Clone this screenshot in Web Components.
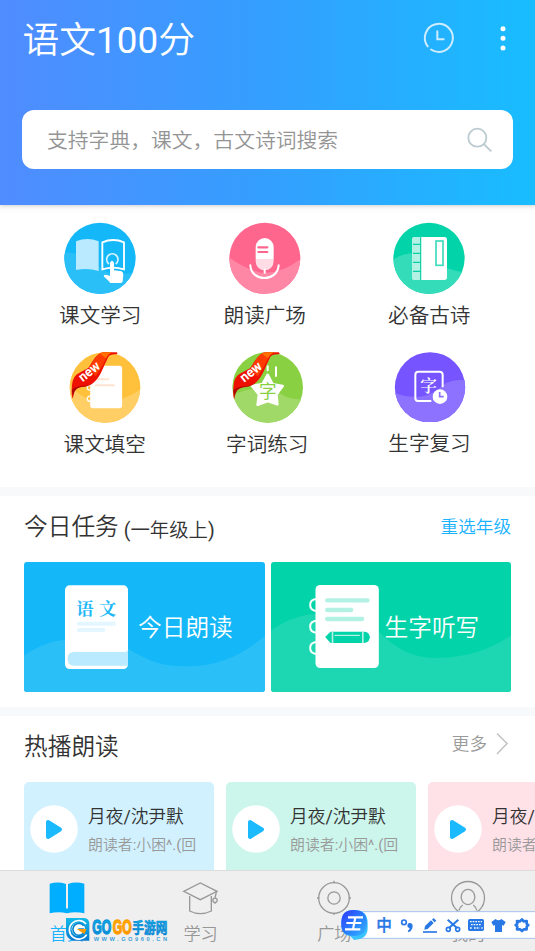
<!DOCTYPE html>
<html lang="zh-CN">
<head>
<meta charset="utf-8">
<title>语文100分</title>
<style>
html,body{margin:0;height:100%;overflow:hidden;background:#fff}
body{font-family:Roboto,"Noto Sans CJK SC DemiLight","Noto Sans CJK SC",sans-serif;font-weight:400;color:#333}
</style>
</head>
<body>
<yw-app></yw-app>
<script>
function define(name, html) {
  const t = document.createElement('template');
  t.innerHTML = html;
  customElements.define(name, class extends HTMLElement {
    constructor() {
      super();
      this.attachShadow({ mode: 'open' }).appendChild(t.content.cloneNode(true));
    }
  });
}

define('yw-header', `
<style>
:host{display:block;height:205px;flex:none;box-sizing:border-box;padding:0 22px;background:linear-gradient(90deg,#508cff,#349fff 50%,#18bdff);box-shadow:0 1px 4px rgba(0,0,0,.16);position:relative;z-index:1}
.bar{display:flex;align-items:center;height:78px;color:#fff}
h1{margin:0;flex:1;font-size:36.8px;line-height:50px;font-weight:inherit;padding:4px 0 0 .5px}
svg{display:block}
.bar svg{margin:0 2px 2px 0}
.search{margin-top:32px;height:59px;border-radius:12px;background:#fff;display:flex;align-items:center;padding:0 20px 0 25px}
.search span{flex:1;font-size:20.8px;line-height:30px;color:#949494;padding-top:2px}
</style>
<div class="bar"><h1>语文100分</h1>
<svg width="90" height="36" viewBox="470 61 270 108" fill="none" stroke-linecap="round">
<path d="M490 140A42 42 0 1 1 500 149.500" stroke="#cdedff" stroke-width="6"/>
<path d="M519 95V119H538" stroke="#cdedff" stroke-width="6"/>
<g fill="#fff"><circle cx="716" cy="87" r="7.500"/><circle cx="716" cy="116" r="7.500"/><circle cx="716" cy="145" r="7.500"/></g></svg></div>
<div class="search"><span>支持字典，课文，古文诗词搜索</span>
<svg width="26" height="26" viewBox="606 380 78 78" fill="none" stroke="#bccad1" stroke-width="5.500"><circle cx="637" cy="412" r="27"/><path d="M656 431L679 453"/></svg></div>`);

define('yw-feature', `
<style>
:host{display:flex;flex-direction:column;align-items:center}
.icon{height:72px}
.label{font-size:20.6px;line-height:30px;margin-top:7px;white-space:nowrap}
::slotted(svg){display:block;width:72px;height:72px}
</style><div class="icon"><slot name="icon"></slot></div><div class="label"><slot></slot></div>`);

const ribbon = (dx) => `<g transform="translate(${dx} 0)">
<path d="M96 192C92 178 94 160 95 148Q98 124 116 115L144 100C152 90 158 73 175 59Q181 52 194 52L230 52Q236 56 230 58Q210 57 205 66L193 91C185 111 174 135 155 148C140 158 112 153 101 171Q97 179 98 190Z" fill="#ee1000"/>
<path d="M146 99C155 88 160 72 177 57Q184 53 197 52L217 52Q206 56 200 67L188 91L167 125Z" fill="#ff3b00"/><path d="M180 56Q186 52 195 52H216Q203 58 198 70Z" fill="#ff7100"/>
<path d="M94 166Q106 155 132 154Q148 152 158 145Q144 157 122 157Q102 160 98 186Z" fill="#b00000"/>
<text x="0" y="0" transform="translate(127 143) rotate(-38)" font-family="Roboto,sans-serif" font-weight="700" font-size="41" fill="#fff" textLength="71" lengthAdjust="spacingAndGlyphs">new</text></g>`;

define('yw-features', `
<style>
:host{display:grid;grid-template-columns:repeat(3,164.5px);grid-auto-rows:129px;height:265px;padding:17px 0 0 18px;flex:none;background:linear-gradient(#f9f9f9,#fff 9px)}
.shift{padding-left:9px}.mid{padding-left:5px}.last{padding-left:.500px;margin-top:-1px}
</style>
<yw-feature><svg slot="icon" viewBox="72 36 216 216"><defs><clipPath id="c1"><circle cx="180" cy="145" r="107"/></clipPath></defs>
<g clip-path="url(#c1)"><path fill="#14b8f8" d="M72 36h216v217H72z"/><path fill="#2bbff8" d="M72 129Q110 124 151 150Q211 207 258 191Q275 188 290 187V253H72z"/></g>
<path d="M108 94Q142 80 176 94V183Q142 172 108 180Z" fill="#b9eaff"/><path d="M187 97Q220 83 252 97V178Q219 168 187 178Z" fill="none" stroke="#fff" stroke-width="5.500"/>
<path d="M207 162A17 17 0 1 1 227 162" fill="none" stroke="#d9f4ff" stroke-width="5"/><path d="M210 158Q216 146 222 158V181L240 183Q250 184 250 194L248 213Q248 219 239 219H211Q203 209 193 201Q188 194 198 194L210 198Z" fill="#fff"/></svg>课文学习</yw-feature>
<yw-feature><svg slot="icon" viewBox="56 36 216 216"><defs><clipPath id="c2"><circle cx="163.500" cy="145" r="106.500"/></clipPath></defs><g clip-path="url(#c2)"><path fill="#ff668d" d="M55 36h218v217H55z"/><path fill="#ff87a6" d="M55 142Q110 180 151 188Q214 192 272 146V253H55z"/></g>
<path d="M136 147V111a27 27 0 0 1 54 0v36z" fill="#fff"/><path d="M136 147h54v7a27 27 0 0 1-54 0z" fill="#ffdce6"/><path d="M144 112h27M144 126h27" stroke="#ff668d" stroke-width="6.500" stroke-linecap="round"/><path d="M120 166C123 217 201 217 205 166" fill="none" stroke="#fff" stroke-width="6" stroke-linecap="round"/><path d="M163 176V191" stroke="#fff" stroke-width="6"/></svg>朗读广场</yw-feature>
<yw-feature><svg slot="icon" viewBox="549 36 216 216"><defs><clipPath id="c3"><circle cx="657" cy="145" r="107"/></clipPath></defs><g clip-path="url(#c3)"><path fill="#03d3a8" d="M548 36h218v217H548z"/><path fill="#35dcba" d="M548 151C582 124 626 123 666 151Q705 181 766 187V253H548z"/></g>
<rect x="606" y="81" width="105" height="129" rx="8" fill="#fff"/><path d="M630 81h-16q-8 0-8 8v113q0 8 8 8h16z" fill="#b2f1e4"/><path d="M632 81V210M609 103h23M609 130h23M609 157h23M609 184h23" stroke="#09cfa5" stroke-width="3.500"/><rect x="678" y="93" width="21" height="73" fill="#fff" stroke="#3ddcbd" stroke-width="5"/></svg>必备古诗</yw-feature>
<yw-feature class="shift"><svg slot="icon" viewBox="87 48 216 219"><defs><clipPath id="c4"><circle cx="195" cy="159" r="107.500"/></clipPath></defs><g clip-path="url(#c4)"><path fill="#ffc13b" d="M86 48h220v220H86z"/><path fill="#ffce65" d="M86 151Q132 202 190 204Q246 203 304 164V268H86z"/></g>
<path d="M153 150q-12 2-12 10t12 7M153 184q-12 2-12 10t12 7" fill="none" stroke="#fff" stroke-width="4"/><rect x="150" y="93" width="97" height="129" rx="8" fill="#fff"/><path d="M167 134h38M167 152h55" stroke="#ffe4d2" stroke-width="6" stroke-linecap="round"/>${ribbon(0)}</svg>课文填空</yw-feature>
<yw-feature class="mid"><svg slot="icon" viewBox="64 48 216 216"><defs><clipPath id="c5"><circle cx="174" cy="157" r="106"/></clipPath></defs><g clip-path="url(#c5)"><path fill="#89d143" d="M64 48h220v220H64z"/><path fill="#a0d968" d="M64 183Q109 158 158 161Q188 160 220 181Q248 196 281 192V268H64z"/></g>
<path d="M199 97V123M174 94V106" stroke="#fff" stroke-width="6" stroke-linecap="round"/><path d="M174 120L189 148L219 153L200 178L203 208L174 198L144 209L148 178L127 153L159 147Z" fill="#fff" stroke="#fff" stroke-width="8" stroke-linejoin="round"/>
<text x="148" y="190" font-size="53" font-weight="400" font-family="Noto Sans CJK SC,sans-serif" fill="#89d143">字</text>${ribbon(-23)}</svg>字词练习</yw-feature>
<yw-feature class="last"><svg slot="icon" viewBox="552 45 216 216"><defs><clipPath id="c6"><circle cx="660" cy="157" r="105.500"/></clipPath></defs><g clip-path="url(#c6)"><path fill="#7654ff" d="M552 48h220v220H552z"/><path fill="#8d71ff" d="M552 172Q589 190 637 184Q675 177 698 150Q728 132 768 136V268H552z"/></g>
<path d="M664 198H624q-8 0-8-8V119q0-9 9-9H688q10 0 10 9V157" fill="none" stroke="#fff" stroke-width="6"/><text x="631" y="172" font-size="50" font-weight="600" font-family="Noto Serif CJK SC,Noto Sans CJK SC,serif" fill="#fff">字</text><circle cx="690" cy="185" r="22" fill="#fff"/><path d="M689 171v14h12" fill="none" stroke="#8d71ff" stroke-width="5"/></svg>生字复习</yw-feature>`);

define('yw-section', `
<style>
:host{display:block;border-top:9px solid #f8f9fb;flex:none}
header{display:flex;justify-content:space-between;height:66px;padding:0 24px;box-sizing:border-box}
.h{font-size:23.7px;line-height:62px;white-space:nowrap}
</style><header><div class="h"><slot name="title"></slot></div><slot name="action"></slot></header><slot></slot>`);

define('yw-task', `
<style>
:host{display:block;width:240.500px;height:130px;border-radius:3px;overflow:hidden;background:var(--bg);position:relative}
::slotted(svg){position:absolute;inset:0;display:block;width:100%;height:100%}
.t{position:relative;padding-left:114px;color:#fff;font-size:23.7px;line-height:132px;white-space:nowrap}
</style><slot name="art"></slot><div class="t"><slot></slot></div>`);

define('yw-audio', `
<style>
:host{display:flex;flex:none;width:190px;height:100px;border-radius:5px 5px 0 0;background:var(--bg);overflow:hidden}
svg{flex:none;margin:23px 10.500px 0 5.500px;width:48px;height:48px;display:block}
.a{font-size:17.7px;line-height:26px;margin-top:22px;white-space:nowrap}
.b{font-size:14.9px;line-height:22px;color:#999;margin-top:4px;white-space:nowrap}
</style>
<svg viewBox="0 0 48 48"><circle cx="24" cy="24" r="23.800" fill="#fff"/><path d="M18 17L30 24.500L18 32Z" fill="#1bbaff" stroke="#1bbaff" stroke-width="4" stroke-linejoin="round"/></svg>
<div><div class="a">月夜/沈尹默</div><div class="b">朗读者:小困^.(回</div></div>`);

define('yw-tab', `
<style>
:host{display:flex;flex-direction:column;align-items:center;flex:1;color:#979797}
:host([active]){color:#1bb3ff}
::slotted(svg){display:block;width:40px;height:40px;margin-top:7px}
span{font-size:17.2px;line-height:26px;margin-top:3px}
</style><slot name="icon"></slot><span><slot></slot></span>`);

define('yw-tabs', `
<style>:host{display:flex;flex:none;height:81px;box-sizing:border-box;border-top:1px solid #dcdcdc;background:#efefef}</style>
<yw-tab active><svg slot="icon" viewBox="140 40 120 120" fill="#00aeff"><path d="M148 57Q174 50 197 58V130Q200 134 203 130V58Q226 50 252 57V146Q224 140 200 146Q175 140 148 146Z"/></svg>首页</yw-tab>
<yw-tab><svg slot="icon" viewBox="542 40 120 120" fill="none" stroke="#999" stroke-width="4"><path d="M550 80L600 55L650 80L600 105Z"/><path d="M568 94V139Q600 155 633 139V94M648 82L644 100M644 113V117"/><circle cx="644" cy="107" r="6.500"/></svg>学习</yw-tab>
<yw-tab><svg slot="icon" viewBox="147 40 120 120" fill="none" stroke="#999" stroke-width="4"><circle cx="207" cy="100" r="46"/><circle cx="207" cy="100" r="18.500"/><path d="M207 48v8M207 144v7M156 100h7M251 100h7"/></svg>广场</yw-tab>
<yw-tab><svg slot="icon" viewBox="549 40 120 120" fill="none" stroke="#999" stroke-width="4"><circle cx="609" cy="100" r="49.500"/><ellipse cx="609" cy="97" rx="20.500" ry="23"/><path d="M582 137Q586 126 593 121M635 137Q632 126 625 121"/></svg>我的</yw-tab>`);

define('yw-mark', `
<style>:host{position:absolute;left:65px;top:916px;z-index:3}svg{display:block}</style>
<svg width="106" height="27" viewBox="195 153 318 81">
<defs><linearGradient id="b" x1="0" y1="0" x2="0" y2="1"><stop stop-color="#13bbe9"/><stop offset="1" stop-color="#0878ce"/></linearGradient><linearGradient id="o" x1="0" y1="0" x2="0" y2="1"><stop stop-color="#ffc400"/><stop offset="1" stop-color="#ff8500"/></linearGradient></defs>
<path d="M198 159H250Q268 159 268 176V227H219Q198 221 198 199Z" fill="url(#b)"/>
<path d="M258 177A28 28 0 1 0 260 209" fill="none" stroke="#fff" stroke-width="5"/><circle cx="235" cy="193" r="20" fill="#fff"/><path d="M251 182A18 18 0 1 0 250 205V192H235" fill="none" stroke="#0787cf" stroke-width="5"/><path d="M230 192H260L253 207Z" fill="#ff9b00"/>
<g font-family="Liberation Sans,sans-serif" font-weight="700" stroke-width="4"><text transform="translate(277 206) scale(.6 1)" font-size="59" fill="url(#b)" stroke="#0b97dc" textLength="95" lengthAdjust="spacingAndGlyphs">GO</text><text transform="translate(338 206) scale(.6 1)" font-size="59" fill="url(#o)" stroke="#ff9d00" textLength="95" lengthAdjust="spacingAndGlyphs">GO</text></g>
<text transform="translate(397 205) scale(.795 1)" font-size="44" font-weight="700" font-family="Noto Sans CJK SC,sans-serif" fill="url(#b)" stroke="#0b8bd6" stroke-width="2">手游网</text>
<text x="281" y="227" font-size="17" font-weight="700" font-family="Liberation Sans,sans-serif" fill="#3e9fda" textLength="220">WWW.GO960.CN</text></svg>`);

define('yw-ime', `
<style>:host{position:absolute;left:340px;top:908px;z-index:3}svg{display:block}</style>
<svg width="195" height="34" viewBox="225 129 585 102">
<defs><linearGradient id="g" x1="0" y1="0" x2="1" y2="1"><stop stop-color="#3036fa"/><stop offset=".5" stop-color="#287bff"/><stop offset="1" stop-color="#35b9ff"/></linearGradient></defs>
<path d="M812 140H280V220H812Z" fill="#fff" stroke="#a5c3ee" stroke-width="3"/>
<path d="M229 172Q229 135 266 135Q308 135 308 174V190Q308 223 267 225L256 213Q229 210 229 180Z" fill="#3bc4ff"/><path d="M229 172Q229 135 266 135Q306 135 306 174Q306 213 267 213Q229 213 229 180Z" fill="url(#g)"/>
<path d="M249 157H294M244 174H289M240 193H286M271 157L264 193" stroke="#fff" stroke-width="6.500" fill="none"/>
<text x="334" y="198" font-size="47" font-weight="500" font-family="Noto Sans CJK SC,sans-serif" fill="#2878e5" stroke="#2878e5" stroke-width="1">中</text>
<g fill="none" stroke="#2878e5" stroke-width="5"><circle cx="417" cy="172" r="7"/><path d="M474 201H516"/><path d="M548 164L577 190M580 164L551 190" stroke-width="6"/><circle cx="550" cy="193" r="6"/><circle cx="578" cy="193" r="6"/></g>
<g fill="#2878e5"><path d="M429 187a8 8 0 1 1 14-5q0 13-12 20l-3-4q6-4 6-8z"/><path d="M478 194L480 183L498 166L506 174L488 192ZM501 164L506 159L514 167L509 172Z"/><rect x="609" y="162" width="48" height="36" rx="5"/><path d="M679 171L692 162Q700 170 709 162L722 171L716 182L711 180V201H690V180L685 182Z"/></g>
<path d="M615 170h36M618 179h31M615 189h6m6 0h17m5 0h4" stroke="#fff" stroke-width="4" stroke-dasharray="5 3"/>
<path d="M771 163L776 169L785 168L785 176L790 180L785 185L785 193L776 193L771 198L765 193L756 193L757 185L752 180L757 176L756 168L765 169Z" fill="none" stroke="#2878e5" stroke-width="8" stroke-linejoin="round"/></svg>`);

define('yw-app', `
<style>
:host{display:flex;flex-direction:column;height:100vh;position:relative;overflow:hidden}
main{flex:1;min-height:0;overflow:hidden}
.sub{font-size:19.4px;margin-left:5px;position:relative;top:2px}
.pick{font-size:17.6px;line-height:62px;color:#1bb3ff;white-space:nowrap}
.more{font-size:17.6px;line-height:56px;color:#999;display:flex;white-space:nowrap}
.more svg{margin:16px 1px 0 8px}
.tasks{display:flex;gap:6px;padding:0 24px 15px}
.cards{display:flex;gap:12px;padding-left:24px}
</style>
<yw-header></yw-header>
<main>
<yw-features></yw-features>
<yw-section><span slot="title">今日任务<span class="sub">(一年级上)</span></span><span slot="action" class="pick">重选年级</span>
<div class="tasks">
<yw-task style="--bg:#14b8f8"><svg slot="art" viewBox="72 246 721.500 390"><path fill="#2bbff8" d="M72 527C115 498 153 483 195 479L384 506C478 562 506 556 565 559C657 558 730 523 795 467V637H72z"/>
<rect x="195" y="316" width="189" height="251" rx="14" fill="#fff"/><path d="M384 511Q381 516 373 516H222Q203 516 203 536Q203 557 222 557H384Z" fill="#b9eaff"/><path d="M236 431h106M236 450h74" stroke="#e4f6ff" stroke-width="12" stroke-linecap="round"/>
<text x="229" y="405" font-size="52" font-weight="700" font-family="Noto Serif CJK SC,Noto Sans CJK SC,serif" fill="#20b8f7" textLength="120">语文</text></svg>今日朗读</yw-task>
<yw-task style="--bg:#03d3a8"><svg slot="art" viewBox="17.500 246 721.500 390"><path fill="#1cd7b1" d="M16 453C51 428 92 409 135 403H290L341 455C400 514 450 533 515 534C608 532 676 508 740 465V637H16z"/>
<path d="M157 357q-22 0-22 18t22 18M157 422q-22 0-22 18t22 18M157 486q-22 0-22 18t22 18" fill="none" stroke="#fff" stroke-width="6"/><rect x="151" y="315" width="190" height="249" rx="14" fill="#fff"/><path d="M186 361h121M186 390h72M186 417h105" stroke="#b2f1e4" stroke-width="13" stroke-linecap="round"/>
<path d="M180 471L196 455H298Q314 457 314 472Q313 487 298 489H196Z" fill="#03d3a8"/><path d="M202 455v34M293 455v34" stroke="#b2f1e4" stroke-width="5"/><path d="M208 466h76" stroke="#d9f8f2" stroke-width="3"/></svg>生字听写</yw-task>
</div></yw-section>
<yw-section><span slot="title">热播朗读</span><span slot="action" class="more">更多<svg width="15" height="24" viewBox="0 0 15 24" fill="none" stroke="#c2c2c2" stroke-width="1.500"><path d="M2 1.500L12 11.500L2 22"/></svg></span>
<div class="cards"><yw-audio style="--bg:#d1f1ff"></yw-audio><yw-audio style="--bg:#ccf5eb"></yw-audio><yw-audio style="--bg:#ffe1e8"></yw-audio></div></yw-section>
</main>
<yw-tabs></yw-tabs>
<yw-mark></yw-mark>
<yw-ime></yw-ime>`);
</script>
</body>
</html>
